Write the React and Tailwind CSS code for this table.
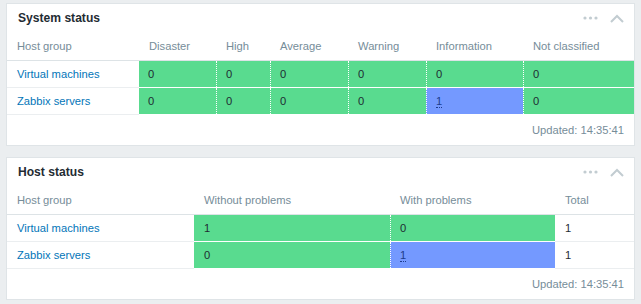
import React from 'react';

const GREEN = 'bg-[#59db8f]';
const BLUE = 'bg-[#7499ff]';

const severities = ['Disaster', 'High', 'Average', 'Warning', 'Information', 'Not classified'];

const systemRows = [
  { name: 'Virtual machines', values: [0, 0, 0, 0, 0, 0] },
  { name: 'Zabbix servers', values: [0, 0, 0, 0, 1, 0] },
];

const hostRows = [
  { name: 'Virtual machines', ok: 1, bad: 0, total: 1 },
  { name: 'Zabbix servers', ok: 0, bad: 1, total: 1 },
];

function WidgetHeader({ title }) {
  return (
    <div className="h-[28px] flex items-center justify-between pl-[11px] pr-[10px]">
      <h2 className="text-[12.1px] font-bold text-[#1f2c33] pt-[1px]">{title}</h2>
      <div className="flex items-center gap-[12px]">
        <svg width="15" height="4" viewBox="0 0 15 4">
          <circle cx="2" cy="2" r="1.6" fill="#c2ccd1" />
          <circle cx="7.5" cy="2" r="1.6" fill="#c2ccd1" />
          <circle cx="13" cy="2" r="1.6" fill="#c2ccd1" />
        </svg>
        <svg width="14" height="9" viewBox="0 0 14 9">
          <path d="M1 8 L7 2 L13 8" fill="none" stroke="#c2ccd1" strokeWidth="2" />
        </svg>
      </div>
    </div>
  );
}

function Count({ value, problem }) {
  if (problem) {
    return <span className="text-[#1e3c8c] border-b border-dotted border-[#1e3c8c] leading-[12px]">{value}</span>;
  }
  return <span className="text-[#1f2c33]">{value}</span>;
}

// coloured count cell; a dotted white rule separates it from the previous one
function CountCell({ value, divider, pad = 'pl-[9px]' }) {
  const problem = value > 0;
  return (
    <div className={`h-[27px] border-b border-white ${problem ? BLUE : GREEN}`}>
      <div className={`h-full flex items-center ${pad} ${divider ? 'border-l border-dotted border-white' : ''}`}>
        <Count value={value} problem={problem} />
      </div>
    </div>
  );
}

function Footer() {
  return (
    <div className="h-[30px] flex items-center justify-end pr-[10px] text-[#768d99]">Updated: 14:35:41</div>
  );
}

function SystemStatus() {
  return (
    <section className="bg-white border border-[#dfe4e7] h-[143px]">
      <WidgetHeader title="System status" />
      <div className="grid grid-cols-[132px_77px_54px_78px_78px_97px_1fr]">
        <div className="h-[29px] flex items-center pl-[10px] text-[#768d99] border-b border-[#dde3e6]">Host group</div>
        {severities.map((s) => (
          <div key={s} className="h-[29px] flex items-center pl-[10px] text-[#768d99] border-b border-[#dde3e6]">{s}</div>
        ))}
        {systemRows.map((row) => (
          <React.Fragment key={row.name}>
            <div className="h-[27px] flex items-center pl-[10px] border-b border-[#ebeef0]">
              <a className="text-[#0275b8]">{row.name}</a>
            </div>
            {row.values.map((v, i) => (
              <CountCell key={i} value={v} divider={i > 0} />
            ))}
          </React.Fragment>
        ))}
      </div>
      <Footer />
    </section>
  );
}

function HostStatus() {
  return (
    <section className="bg-white border border-[#dfe4e7] h-[143px]">
      <WidgetHeader title="Host status" />
      <div className="grid grid-cols-[187px_196px_165px_1fr]">
        {['Host group', 'Without problems', 'With problems', 'Total'].map((h) => (
          <div key={h} className="h-[29px] flex items-center pl-[10px] text-[#768d99] border-b border-[#dde3e6]">{h}</div>
        ))}
        {hostRows.map((row) => (
          <React.Fragment key={row.name}>
            <div className="h-[27px] flex items-center pl-[10px] border-b border-[#ebeef0]">
              <a className="text-[#0275b8]">{row.name}</a>
            </div>
            <div className={`h-[27px] flex items-center pl-[10px] border-b border-white ${GREEN}`}>
              <Count value={row.ok} />
            </div>
            <CountCell value={row.bad} divider />
            <div className="h-[27px] flex items-center pl-[10px] border-b border-[#ebeef0] text-[#1f2c33]">{row.total}</div>
          </React.Fragment>
        ))}
      </div>
      <Footer />
    </section>
  );
}

export default function App() {
  return (
    <div className="w-[641px] h-[304px] bg-[#ebeef0] pt-[3px] px-[6px] flex flex-col gap-[11px] font-['Liberation_Sans',Arial,sans-serif] text-[11.2px]">
      <SystemStatus />
      <HostStatus />
    </div>
  );
}
